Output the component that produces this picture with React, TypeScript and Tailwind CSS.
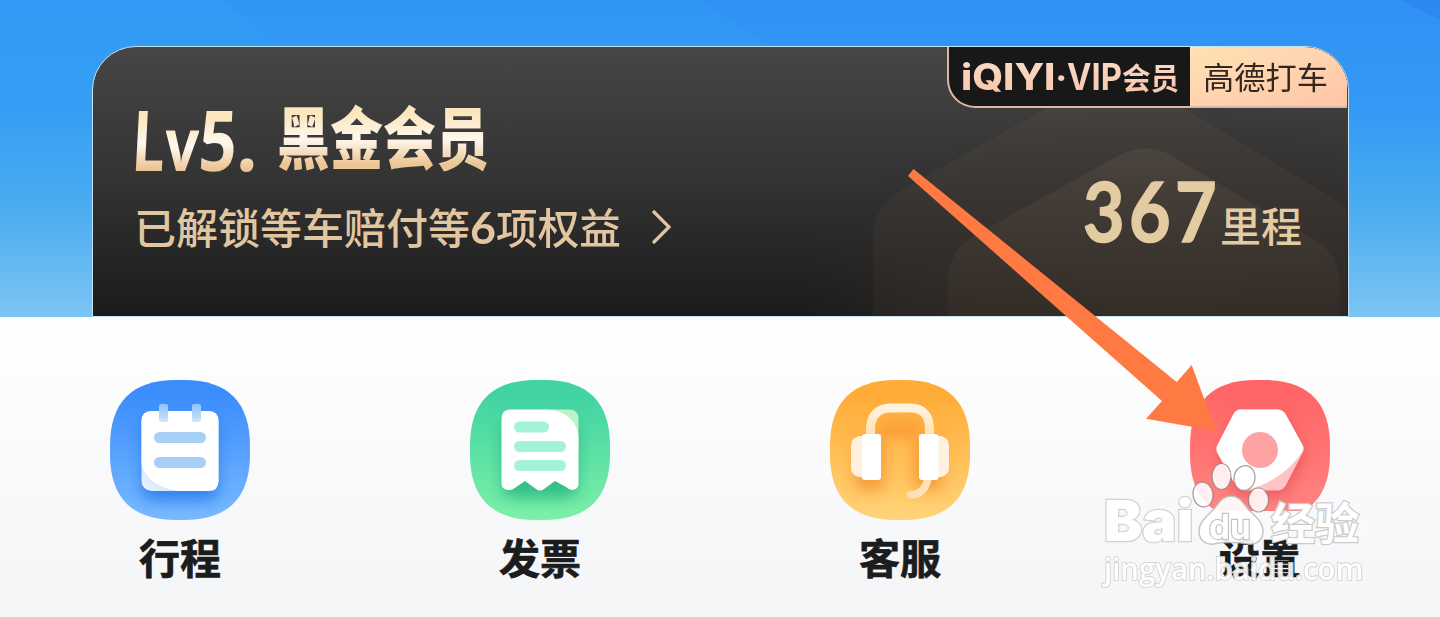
import { useLayoutEffect, useRef, useState, type ReactNode } from "react";

const SQUIRCLE = "M66 0H74C118 0 140 22 140 66V74C140 118 118 140 74 140H66C22 140 0 118 0 74V66C0 22 22 0 66 0Z";

const GOLD =
  "bg-linear-to-b from-[#fbe6bd] from-25% via-[#fff8ee] via-55% to-[#ecc594] to-85% bg-clip-text text-transparent";
const ROSE = "bg-linear-to-b from-[#fde0cf] to-[#f6c0a2] bg-clip-text text-transparent";

/** Condenses or stretches a run of text horizontally to a given width. */
function Fit({ width, className = "", children }: { width: number; className?: string; children: ReactNode }) {
  const ref = useRef<HTMLSpanElement>(null);
  const [scale, setScale] = useState(1);
  useLayoutEffect(() => {
    if (ref.current && ref.current.offsetWidth) setScale(width / ref.current.offsetWidth);
  }, [width]);
  return (
    <span className="inline-flex justify-start whitespace-nowrap" style={{ width }}>
      <span
        ref={ref}
        className={"inline-block shrink-0 origin-left " + className}
        style={{ transform: `scaleX(${scale})` }}
      >
        {children}
      </span>
    </span>
  );
}

function Backdrop() {
  return (
    <svg className="absolute inset-0" width="1440" height="317" viewBox="0 0 1440 317" aria-hidden="true">
      <defs>
        <linearGradient id="sky" x1="0" y1="0" x2="0" y2="1">
          <stop offset="0" stopColor="#309af5" />
          <stop offset="0.35" stopColor="#369ff4" />
          <stop offset="0.65" stopColor="#4aacf1" />
          <stop offset="1" stopColor="#7bc5f4" />
        </linearGradient>
        <linearGradient id="skyDeep" x1="0" y1="0" x2="0" y2="1">
          <stop offset="0" stopColor="#2f86f7" stopOpacity="0.5" />
          <stop offset="0.6" stopColor="#2f86f7" stopOpacity="0" />
        </linearGradient>
      </defs>
      <rect width="1440" height="317" fill="url(#sky)" />
      <path d="M225 0H1440V317H700L290 56Z" fill="url(#skyDeep)" opacity="0.4" />
      <path d="M700 0H1440V317H1200L800 66Z" fill="url(#skyDeep)" opacity="0.6" />
      <path d="M1400 0H1440V20Z" fill="#2375ee" opacity="0.3" />
    </svg>
  );
}

function CardPattern() {
  return (
    <svg className="absolute inset-0" width="1254" height="269" viewBox="93 47 1254 269" aria-hidden="true">
      <defs>
        <linearGradient id="houseOuter" x1="0" y1="0" x2="0" y2="1">
          <stop offset="0" stopColor="#5a504a" stopOpacity="0.36" />
          <stop offset="1" stopColor="#3c322c" stopOpacity="0.22" />
        </linearGradient>
        <linearGradient id="houseInner" x1="0" y1="0" x2="0" y2="1">
          <stop offset="0" stopColor="#5c5448" stopOpacity="0.4" />
          <stop offset="1" stopColor="#3a3026" stopOpacity="0.4" />
        </linearGradient>
        <radialGradient id="glow">
          <stop offset="0" stopColor="#332e2b" stopOpacity="0.75" />
          <stop offset="0.6" stopColor="#332e2b" stopOpacity="0.5" />
          <stop offset="1" stopColor="#332e2b" stopOpacity="0" />
        </radialGradient>
      </defs>
      <ellipse cx="1160" cy="290" rx="360" ry="190" fill="url(#glow)" />
      <path d="M873 320V240Q873 206 902 190L1105 75Q1145 54 1180 106L1344 205L1380 240V320Z" fill="url(#houseOuter)" />
      <path d="M948 320V282Q948 250 977 234L1118 156Q1145 141 1172 156L1311 238Q1340 254 1340 286V320Z" fill="url(#houseInner)" />
    </svg>
  );
}

function PartnerBadge() {
  return (
    <div className="mr-px flex h-[61px] w-[400px] rounded-bl-[28px] border-b-2 border-l-2 border-[#dcb6a6] bg-[#181818]">
      <div className="flex h-full w-[241px] items-baseline pl-[12px] pt-[3px] leading-[54px]">
        <Fit width={94} className={"font-['Inter'] text-[37px] font-extrabold " + ROSE}>iQIYI</Fit>
        <Fit width={12} className={"font-['Inter'] text-[34px] font-bold " + ROSE}>·</Fit>
        <Fit width={55} className={"font-['Inter'] text-[37px] font-bold " + ROSE}>VIP</Fit>
        <Fit width={57} className={"relative -top-px font-['Noto_Sans_CJK_SC',sans-serif] text-[30px] font-bold " + ROSE}>会员</Fit>
      </div>
      <div className="flex h-full grow items-center bg-linear-to-br from-[#ffe1b5] to-[#ffc6a8] pl-[13px] font-['Noto_Sans_CJK_SC',sans-serif] text-[31px] text-[#33271f]">
        <Fit width={125}>高德打车</Fit>
      </div>
    </div>
  );
}

function MemberCard() {
  return (
    <section className="relative h-[271px] w-[1257px] overflow-hidden rounded-t-[44px] border border-[#c4e2f5] bg-linear-to-b from-[#464646] via-[#333333] via-50% to-[#1b1b1b]">
      <CardPattern />
      <div className="relative flex h-full justify-between">
        <div className="flex flex-col pl-[39px] pt-[50px]">
          <h1 className="flex h-[84px] items-baseline leading-[84px]">
            <span className="flex w-[145px] -skew-x-3 items-baseline font-['Open_Sans'] font-bold">
              <Fit width={33} className={"text-[84px] " + GOLD}>L</Fit>
              <Fit width={34} className={"text-[74px] " + GOLD}>v</Fit>
              <Fit width={38} className={"text-[84px] " + GOLD}>5</Fit>
              <Fit width={22} className={"text-[84px] " + GOLD}>.</Fit>
            </span>
            <Fit width={212} className={"relative -top-[7px] font-['Noto_Sans_CJK_SC',sans-serif] text-[68px] font-black " + GOLD}>黑金会员</Fit>
          </h1>
          <div className="mt-[15px] flex items-center gap-[29px] pl-[2px] text-[#e2c6a0]">
            <p className="flex items-baseline font-['Noto_Sans_CJK_SC',sans-serif] text-[42px] leading-[60px] font-medium">
              <Fit width={336}>已解锁等车赔付等</Fit>
              <Fit width={26} className="font-['Lato'] text-[43px] font-bold">6</Fit>
              <Fit width={125}>项权益</Fit>
            </p>
            <svg width="24" height="40" viewBox="0 0 24 40" fill="none" stroke="currentColor" strokeWidth="3.2" aria-hidden="true">
              <path d="M3 4L19 20L3 36" />
            </svg>
          </div>
        </div>
        <div className="flex flex-col items-end">
          <PartnerBadge />
          <p className="mr-[46px] mt-[57px] flex items-baseline leading-[90px] text-[#e3cba2]">
            <Fit width={42} className="font-['Lato'] text-[82px] font-bold [-webkit-text-stroke:1.5px_#e3cba2]">3</Fit>
            <span className="w-[4px]" />
            <Fit width={42} className="font-['Lato'] text-[82px] font-bold [-webkit-text-stroke:1.5px_#e3cba2]">6</Fit>
            <span className="w-[4px]" />
            <Fit width={42} className="font-['Lato'] text-[82px] font-bold [-webkit-text-stroke:1.5px_#e3cba2]">7</Fit>
            <span className="w-[3px]" />
            <Fit width={82} className="font-['Noto_Sans_CJK_SC',sans-serif] text-[41px] font-medium">里程</Fit>
          </p>
        </div>
      </div>
    </section>
  );
}

function Tile({ id, from, to, children }: { id: string; from: string; to: string; children: ReactNode }) {
  return (
    <svg width="140" height="140" viewBox="0 0 140 140" aria-hidden="true">
      <defs>
        <linearGradient id={id} x1="0" y1="0" x2="0" y2="1">
          <stop offset="0.1" stopColor={from} />
          <stop offset="1" stopColor={to} />
        </linearGradient>
        <filter id={id + "Soft"} x="-40%" y="-40%" width="180%" height="180%">
          <feGaussianBlur stdDeviation="7" />
        </filter>
        <clipPath id={id + "Clip"}>
          <path d={SQUIRCLE} />
        </clipPath>
      </defs>
      <path d={SQUIRCLE} fill={`url(#${id})`} />
      <g clipPath={`url(#${id}Clip)`}>{children}</g>
    </svg>
  );
}

function TripsIcon() {
  return (
    <Tile id="trips" from="#3b8dfc" to="#79b9ff">
      <defs>
        <linearGradient id="ring" x1="0" y1="0" x2="0" y2="1">
          <stop offset="0" stopColor="#8dc3fb" />
          <stop offset="1" stopColor="#cfe5fd" />
        </linearGradient>
        <linearGradient id="curl" x1="0" y1="1" x2="1" y2="0">
          <stop offset="0" stopColor="#eef6ff" />
          <stop offset="0.3" stopColor="#c3dcf8" />
        </linearGradient>
      </defs>
      <rect x="32" y="40" width="76" height="80" rx="10" fill="#1f74e8" opacity="0.75" filter="url(#tripsSoft)" />
      <rect x="31.5" y="31" width="77" height="80" rx="10" fill="url(#curl)" />
      <path d="M41.500 31H98.500Q108.500 31 108.500 41V101Q108.500 111 98.500 111H68C47 108 35 98 31.500 84V41Q31.500 31 41.500 31Z" fill="#fff" />
      <rect x="49" y="24" width="9" height="18" rx="2" fill="url(#ring)" />
      <rect x="82" y="24" width="9" height="18" rx="2" fill="url(#ring)" />
      <rect x="44" y="52" width="52" height="11" rx="5.5" fill="#a8d0f6" />
      <rect x="44" y="77" width="52" height="11" rx="5.5" fill="#a8d0f6" />
    </Tile>
  );
}

function InvoiceIcon() {
  return (
    <Tile id="invoice" from="#41d3a3" to="#7df0a8">
      <rect x="32" y="40" width="76" height="78" rx="10" fill="#1fae7c" opacity="0.7" filter="url(#invoiceSoft)" />
      <path d="M82 29.500H99Q108.500 29.500 108.500 39V70L82 60Z" fill="#bdf3c9" />
      <path d="M41 29.500H80C97 32 107 42 108.500 56V104Q108 109 103 110Q99 110 96 107L85 101L74 109Q70 112 66 109L55 101L44 108.500Q40 111 36 109.500Q31.500 108 31.500 103V39Q31.500 29.500 41 29.500Z" fill="#fff" />
      <rect x="44" y="41.500" width="35" height="11" rx="5.500" fill="#a4f2d8" />
      <rect x="44" y="61" width="52" height="11" rx="5.500" fill="#a4f2d8" />
      <rect x="44" y="80" width="52" height="11" rx="5.500" fill="#a4f2d8" />
    </Tile>
  );
}

function SupportIcon() {
  return (
    <Tile id="support" from="#ffab36" to="#ffd479">
      <defs>
        <linearGradient id="band" x1="0" y1="0" x2="0" y2="1">
          <stop offset="0" stopColor="#fff3df" />
          <stop offset="1" stopColor="#ffe0b0" />
        </linearGradient>
      </defs>
      <g fill="#f58a2c" opacity="0.7" filter="url(#supportSoft)">
        <rect x="26" y="60" width="28" height="50" />
        <rect x="84" y="60" width="28" height="50" />
        <path d="M48 44H92V56H48Z" />
      </g>
      <path d="M40.500 56V49C40.500 35 49 28 60 28H81C92 28 99.500 35 99.500 49V56" fill="none" stroke="url(#band)" strokeWidth="9" />
      <path d="M98 98C96 109 90 114.500 80.500 115" fill="none" stroke="#ffe2b4" strokeWidth="7.500" strokeLinecap="round" />
      <path d="M34 56H29Q21 58 21 66V88Q21 95 29 97H34Z" fill="#fff0e0" />
      <path d="M106 56H111Q119 58 119 66V88Q119 95 111 97H106Z" fill="#fff0e0" />
      <rect x="32" y="54" width="19" height="46" rx="3" fill="#fff" />
      <rect x="89" y="54" width="19.500" height="46" rx="3" fill="#fff" />
    </Tile>
  );
}

function SettingsIcon() {
  return (
    <Tile id="settings" from="#ff6566" to="#ff8782">
      <path d="M48 36H94L115 76L94 116H48L28 76Z" fill="#df4448" opacity="0.6" filter="url(#settingsSoft)" />
      <path d="M50 29.500H87Q93 29.500 96 35L112 64Q115 69 112 74L96 105Q93 110.500 87 110.500H55Q49 110.500 45 104L28 74Q25 69 28 64L43 35Q46 29.500 50 29.500Z" fill="#ffc3c6" />
      <path d="M50 29.500H87Q93 29.500 96 35L112 64Q115 69 112 72C100 90 82 103 60 109Q49 110.500 45 104L28 74Q25 69 28 64L43 35Q46 29.500 50 29.500Z" fill="#fff" />
      <circle cx="70" cy="70" r="18" fill="#ffa2a3" />
    </Tile>
  );
}

const SHORTCUTS = [
  { label: "行程", icon: <TripsIcon /> },
  { label: "发票", icon: <InvoiceIcon /> },
  { label: "客服", icon: <SupportIcon /> },
  { label: "设置", icon: <SettingsIcon /> },
];

function Arrow() {
  return (
    <svg className="absolute inset-0" width="1440" height="617" viewBox="0 0 1440 617" aria-hidden="true">
      <path d="M913.500 169L1176.700 382L1191.700 365L1216 431L1146 418.700L1162 401L908 176Z" fill="#ff7a42" />
    </svg>
  );
}

function Watermark() {
  return (
    <div className="absolute left-[1104px] top-[455px] h-[140px] w-[270px]">
      <svg className="absolute inset-0" width="270" height="140" viewBox="1104 455 270 140" aria-hidden="true">
        <rect x="1180" y="511" width="190" height="27" fill="#f8f9fa" />
        <g fill="#fff" fillOpacity="0.88" stroke="#8f7f7f" strokeOpacity="0.75" strokeWidth="1.200">
          <ellipse cx="1203" cy="494.500" rx="10" ry="12.500" transform="rotate(-8 1203 494.500)" />
          <ellipse cx="1221.500" cy="476.500" rx="9.500" ry="13" />
          <ellipse cx="1244.500" cy="478" rx="10.500" ry="12.500" transform="rotate(8 1244.500 478)" />
          <ellipse cx="1258.500" cy="500" rx="10" ry="12" />
        </g>
        <path d="M1231 496C1240 496 1243 503 1249 510C1256 517 1263 522 1263 531C1263 540 1257 545 1248 544C1238 542 1222 542 1214 544C1205 545 1199 540 1199 531C1199 522 1206 517 1213 510C1219 503 1222 496 1231 496Z" fill="#fff" fillOpacity="0.92" stroke="#b5b5b5" strokeOpacity="0.8" strokeWidth="1.500" />
      </svg>
      <div className="relative flex h-full flex-col text-white">
        <p className="flex h-[56px] items-baseline pt-[38px] leading-[56px]">
          <Fit width={89} className="font-['Inter'] text-[56px] font-black [-webkit-text-stroke:2.5px_#d3d3d4] [paint-order:stroke_fill]">Bai</Fit>
          <span className="w-[16px]" />
          <Fit width={42} className="relative -top-[2px] font-['Inter'] text-[34px] font-bold [-webkit-text-stroke:2.5px_#c4c4c5] [paint-order:stroke_fill]">du</Fit>
          <span className="w-[20px]" />
          <Fit width={88} className="relative -top-px font-['Noto_Sans_CJK_SC',sans-serif] text-[44px] font-bold [-webkit-text-stroke:2.5px_#cbcbcc] [paint-order:stroke_fill]">经验</Fit>
        </p>
        <p className="mt-[38px] h-[40px] leading-[40px]">
          <Fit width={259} className="font-['Open_Sans'] text-[30px] font-semibold opacity-90 [-webkit-text-stroke:2px_#d3d3d4] [paint-order:stroke_fill]">jingyan.baidu.com</Fit>
        </p>
      </div>
    </div>
  );
}

export default function App() {
  return (
    <main className="relative flex h-[617px] w-[1440px] flex-col overflow-hidden">
      <header className="relative h-[317px] shrink-0 pl-[92px] pt-[46px]">
        <Backdrop />
        <MemberCard />
      </header>
      <nav className="grid grow grid-cols-4 bg-linear-to-b from-white to-[#f4f5f7] pt-[63px]">
        {SHORTCUTS.map((item) => (
          <a key={item.label} className="flex flex-col items-center">
            {item.icon}
            <span className="mt-[8px] font-['Noto_Sans_CJK_SC',sans-serif] text-[41px] leading-[56px] font-bold text-[#1b1c1d] [-webkit-text-stroke:0.7px_#1b1c1d]">
              {item.label}
            </span>
          </a>
        ))}
      </nav>
      <Arrow />
      <Watermark />
    </main>
  );
}
